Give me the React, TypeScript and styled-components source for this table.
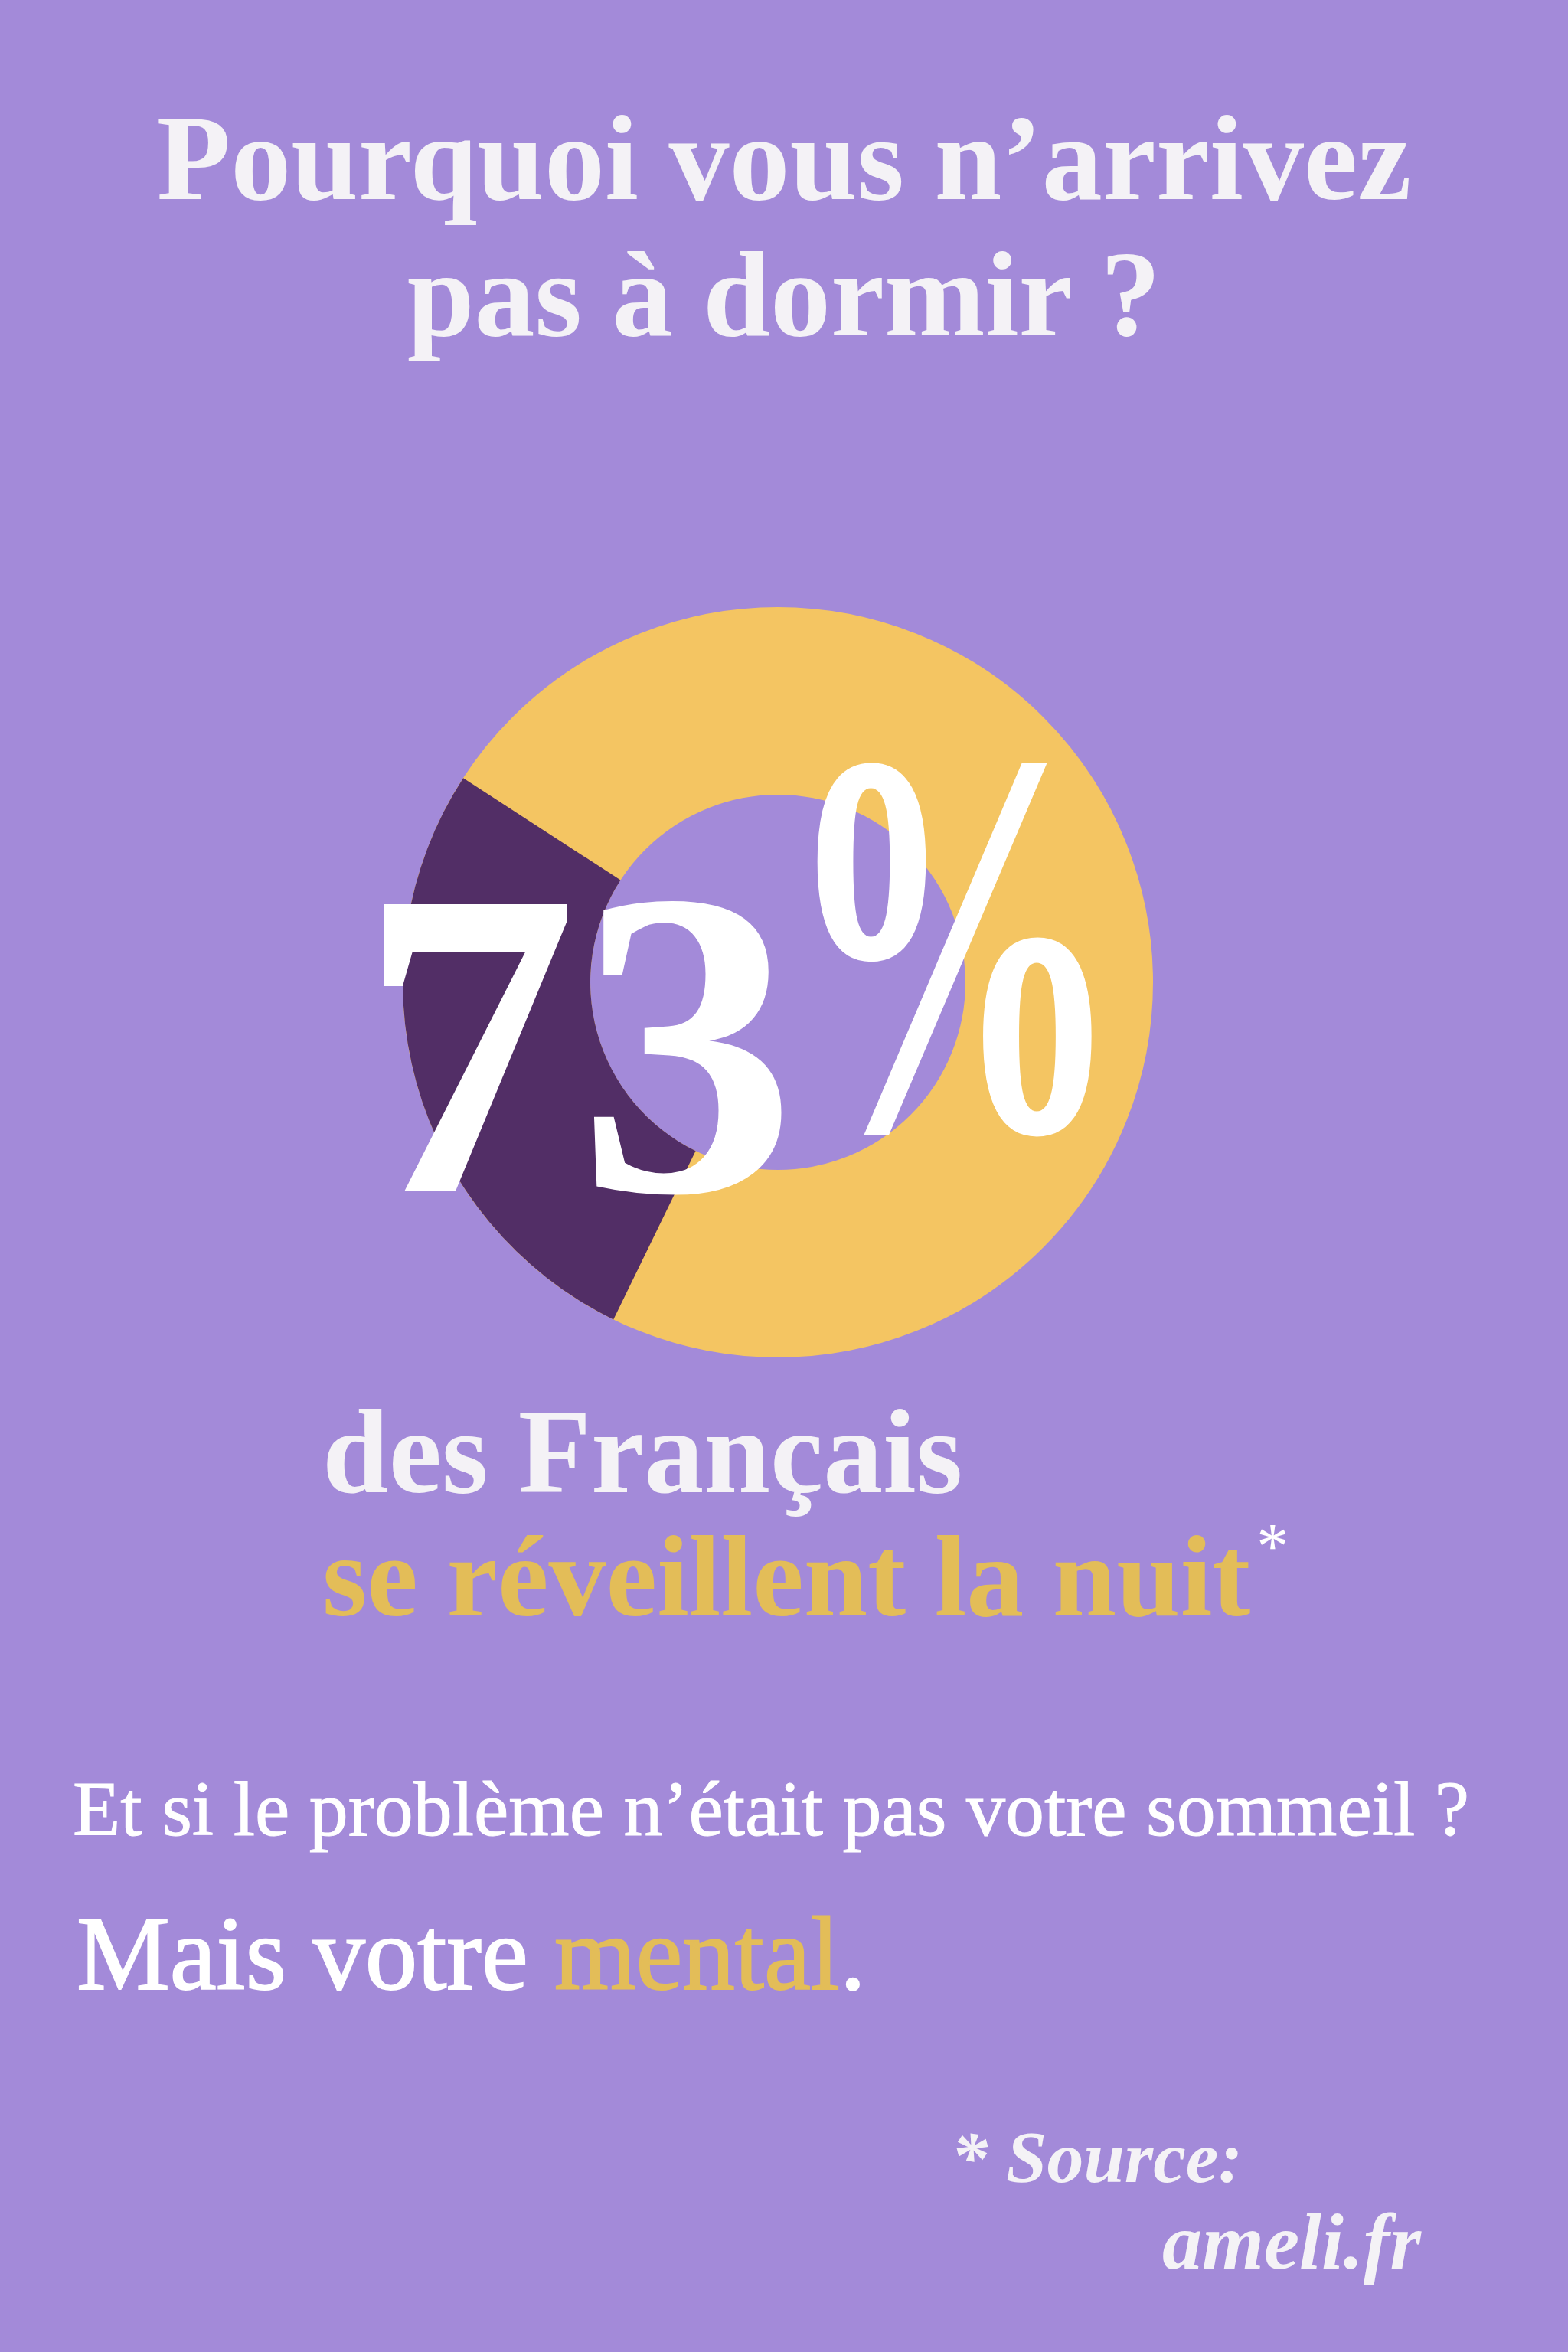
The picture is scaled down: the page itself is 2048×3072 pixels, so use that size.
import React from "react";
import styled, { createGlobalStyle } from "styled-components";

const Global = createGlobalStyle`
  html, body { margin: 0; padding: 0; background: #a38ad9; }
  * { box-sizing: border-box; }
`;

const Page = styled.div`
  width: 2048px;
  height: 3072px;
  background: #a38ad9;
  display: flex;
  flex-direction: column;
  font-family: "Liberation Serif", "Times New Roman", serif;
  overflow: hidden;
`;

const Title = styled.h1`
  margin: 0;
  padding-top: 118px;
  text-align: center;
  font-size: 158px;
  line-height: 178px;
  font-weight: 700;
  color: #f4f2f6;
`;

const ChartWrap = styled.div`
  position: relative;
  width: 980px;
  height: 980px;
  margin: 319px 0 0 526px;
`;

const Donut = styled.svg`
  display: block;
  width: 980px;
  height: 980px;
`;

const BigNumber = styled.div`
  position: absolute;
  left: -57px;
  top: 284px;
  font-size: 571px;
  line-height: 1;
  font-weight: 700;
  color: #ffffff;
  white-space: nowrap;
`;

const Pct = styled.span`
  display: inline-block;
  margin-left: -18px;
  line-height: 1;
  transform-origin: 0 478px;
  transform: translateY(-80px) scale(0.78, 1.26);
`;

const Stat = styled.div`
  margin: 43px 0 0 421px;
  display: flex;
  flex-direction: column;
`;

const StatLine = styled.div<{ $color: string; $size: number }>`
  font-size: ${(p) => p.$size}px;
  line-height: 162px;
  font-weight: 700;
  color: ${(p) => p.$color};
  white-space: nowrap;
`;

const Star = styled.sup`
  font-size: 84px;
  line-height: 0;
  font-weight: 400;
  color: #ffffff;
  vertical-align: top;
  position: relative;
  top: 42px;
  margin-left: 8px;
`;

const Question = styled.p`
  margin: 163px 0 0 95px;
  font-size: 102px;
  line-height: 120px;
  font-weight: 400;
  color: #ffffff;
  white-space: nowrap;
  -webkit-text-stroke: 1px #ffffff;
`;

const Answer = styled.p`
  margin: 49px 0 0 100px;
  font-size: 137px;
  line-height: 161px;
  font-weight: 400;
  color: #ffffff;
  white-space: nowrap;
  -webkit-text-stroke: 2px currentColor;
`;

const Accent = styled.span`
  color: #e3bd58;
`;

const Source = styled.div`
  margin: 130px 0 0 1242px;
  display: flex;
  flex-direction: column;
  font-style: italic;
  font-weight: 700;
  color: #f4f2f6;
`;

const SourceLine = styled.div<{ $size: number; $indent: number }>`
  font-size: ${(p) => p.$size}px;
  line-height: 110px;
  margin-left: ${(p) => p.$indent}px;
  white-space: nowrap;
`;

// Annular sector for the 27% purple slice (math angles 147° -> 244°)
const PURPLE_PATH =
  "M 79.04 223.15 A 490 490 0 0 0 275.2 930.4 L 382.6 710.2 A 245 245 0 0 1 284.5 356.6 Z";

export default function App() {
  return (
    <>
      <Global />
      <Page>
        <Title>
          Pourquoi vous n’arrivez
          <br />
          pas à dormir ?
        </Title>

        <ChartWrap>
          <Donut viewBox="0 0 980 980">
            <circle cx="490" cy="490" r="367.5" fill="none" stroke="#f4c562" strokeWidth="245" />
            <path d={PURPLE_PATH} fill="#522e66" />
          </Donut>
          <BigNumber>
            73<Pct>%</Pct>
          </BigNumber>
        </ChartWrap>

        <Stat>
          <StatLine $color="#f4f2f6" $size={156}>des Français</StatLine>
          <StatLine $color="#e3bd58" $size={150}>
            se réveillent la nuit<Star>*</Star>
          </StatLine>
        </Stat>

        <Question>Et si le problème n’était pas votre sommeil ?</Question>
        <Answer>
          Mais votre <Accent>mental</Accent>.
        </Answer>

        <Source>
          <SourceLine $size={96} $indent={0}>* Source:</SourceLine>
          <SourceLine $size={104} $indent={276}>ameli.fr</SourceLine>
        </Source>
      </Page>
    </>
  );
}
